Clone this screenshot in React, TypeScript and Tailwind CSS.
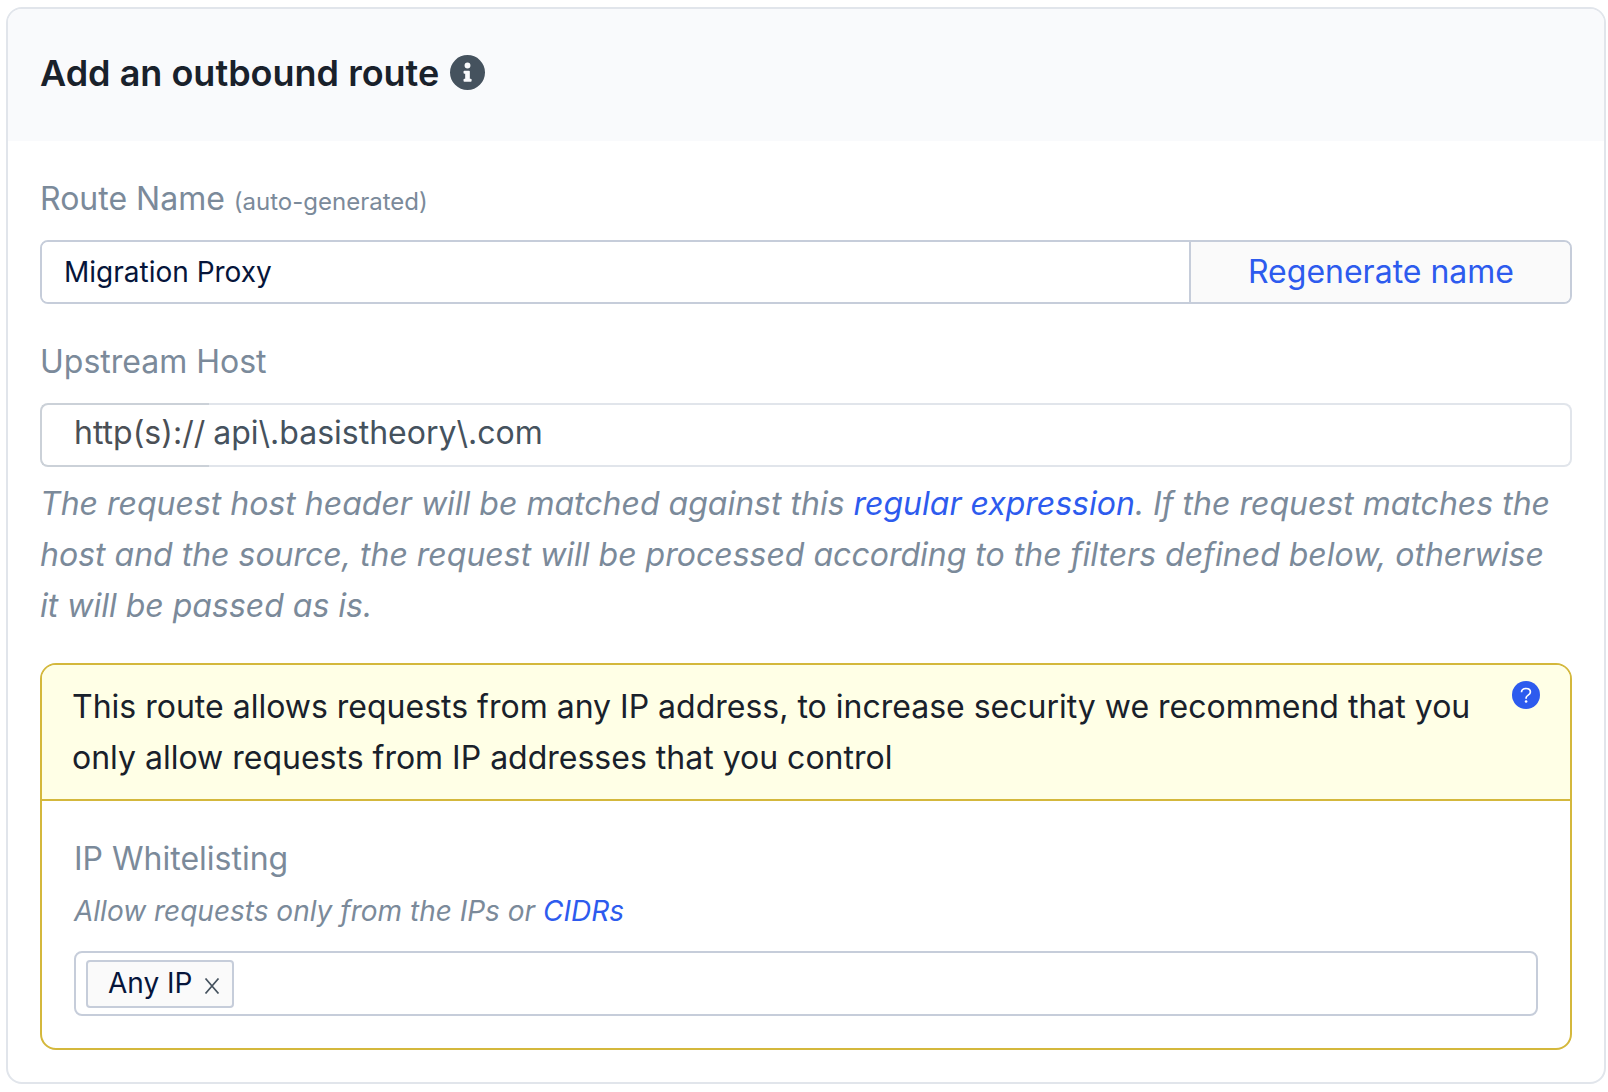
import React from "react";

function InfoIcon() {
  return (
    <svg viewBox="0 0 512 512" className="mb-0.5 size-[35px] shrink-0 fill-[#45525e]" aria-hidden="true">
      <path d="M256 0a256 256 0 1 0 0 512a256 256 0 1 0 0-512zm0 110a43 43 0 1 1 0 86a43 43 0 1 1 0-86zm60 271c0 7-5 12-12 12h-94c-7 0-12-5-12-12v-22c0-7 5-12 12-12h12v-72h-12c-7 0-12-5-12-12v-22c0-7 5-12 12-12h68c7 0 12 5 12 12v106h14c7 0 12 5 12 12v22z" />
    </svg>
  );
}

function HelpIcon() {
  return (
    <svg viewBox="0 0 28 28" className="size-7" aria-hidden="true">
      <circle cx="14" cy="14" r="14" fill="#2d5bee" />
      <path
        d="M9.500 11.200c.1-2.300 1.900-3.700 4.500-3.700 2.600 0 4.400 1.400 4.400 3.400 0 1.500-.8 2.300-2.200 3.200-1.400.9-2.100 1.500-2.100 2.700v.9"
        fill="none"
        stroke="#fff"
        strokeWidth="1.700"
      />
      <circle cx="14.100" cy="20.500" r="1.300" fill="#fff" />
    </svg>
  );
}

export default function App() {
  return (
    <main className="pt-[7px] pr-0.5 pb-2 pl-1.5 font-['Inter',sans-serif] text-[32px] leading-[51px] text-[#7b8a9a]">
      <section className="overflow-hidden rounded-2xl border-2 border-[#e1e5eb] bg-white">
        <header className="flex items-center gap-[11px] bg-[#f9fafc] px-8 pt-[38px] pb-[42px]">
          <h1 className="text-[36px] leading-[52px] font-semibold text-[#19212b]">Add an outbound route</h1>
          <InfoIcon />
        </header>

        <form className="px-8 pt-8 pb-8" onSubmit={(e) => e.preventDefault()}>
          <label htmlFor="route-name" className="block">
            Route Name <span className="text-2xl">(auto-generated)</span>
          </label>
          <div className="mt-4 flex h-16 overflow-hidden rounded-lg border-2 border-[#c6cdda]">
            <input
              id="route-name"
              defaultValue="Migration Proxy"
              className="min-w-0 flex-1 bg-white px-[22px] text-[28px] text-[#06153a] outline-none"
            />
            <button type="button" className="border-l-2 border-[#c6cdda] bg-[#fafafa] pr-14 pb-0.5 pl-[57px] text-[#2d5bee]">
              Regenerate name
            </button>
          </div>

          <label htmlFor="upstream-host" className="mt-8 block">
            Upstream Host
          </label>
          <div className="mt-4 flex h-16">
            <span className="rounded-l-lg border-2 border-r-0 border-[#cbd1d8] pt-0.5 pr-1 pl-8 text-[#4b4f55]">
              http(s)://
            </span>
            <input
              id="upstream-host"
              defaultValue="api\.basistheory\.com"
              className="min-w-0 flex-1 rounded-r-lg border-2 border-l-0 border-[#e1e5eb] pb-1.5 pl-1 text-[#45525e] outline-none"
            />
          </div>

          <p className="mt-[11px] pr-4 italic">
            The request host header will be matched against this{" "}
            <a href="#regex" className="text-[#2d5bee]">
              regular expression
            </a>
            . If the request matches the host and the source, the request will be processed according to the filters
            defined below, otherwise it will be passed as is.
          </p>

          <div className="mt-8 overflow-hidden rounded-2xl border-2 border-[#d4b83c]">
            <div className="flex items-start justify-between gap-8 border-b-2 border-[#d4b83c] bg-[#ffffe6] py-4 pr-[30px] pl-[30px] text-[#19212b]">
              <p>
                This route allows requests from any IP address, to increase security we recommend that you only allow
                requests from IP addresses that you control
              </p>
              <button type="button" aria-label="Help" className="shrink-0">
                <HelpIcon />
              </button>
            </div>
            <div className="px-8 pt-8 pb-8">
              <label htmlFor="ip-list" className="block">
                IP Whitelisting
              </label>
              <p className="mt-1 text-[28px] leading-[47px] italic">
                Allow requests only from the IPs or{" "}
                <a href="#cidr" className="text-[#2d5bee]">
                  CIDRs
                </a>
              </p>
              <div className="mt-4 flex h-[65px] items-center gap-2 rounded-lg border-2 border-[#c6cdda] px-2.5">
                <span className="flex h-12 items-center gap-3 rounded-sm border-2 border-[#c6cdda] bg-[#fafafa] pr-3 pl-5 text-[28px] text-[#06153a]">
                  Any IP
                  <button type="button" aria-label="Remove Any IP" className="mt-1">
                    <svg viewBox="0 0 16 16" className="size-4" fill="none" stroke="#45525e" strokeWidth="1.700" aria-hidden="true">
                      <path d="M1.500 .5L14.500 15.500M14.500 .5L1.500 15.500" />
                    </svg>
                  </button>
                </span>
                <input id="ip-list" className="min-w-0 flex-1 text-[28px] outline-none" />
              </div>
            </div>
          </div>
        </form>
      </section>
    </main>
  );
}
